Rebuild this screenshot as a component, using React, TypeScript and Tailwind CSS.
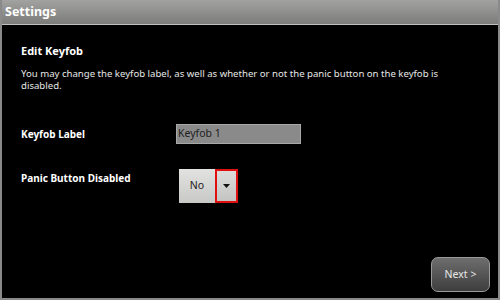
import React from "react";

export default function App() {
  const font = { fontFamily: '"Noto Sans", "Open Sans", sans-serif' };
  return (
    <div
      className="w-[500px] h-[300px] bg-black flex flex-col border-l-[2px] border-r-[2px] border-b-[2px] border-[#8a8a8a] overflow-hidden"
      style={font}
    >
      <div className="h-[25px] shrink-0 bg-gradient-to-b from-[#a2a2a0] to-[#7c7c7a] border-b border-[#c0c0c0] flex items-center pl-[3px]">
        <span className="text-white font-bold text-[12.5px] leading-none">Settings</span>
      </div>
      <div className="flex-1 flex flex-col pl-[19px] pr-[10px] relative">
        <div className="mt-[19px] text-white font-bold text-[11px] leading-[14px]">Edit Keyfob</div>
        <div className="mt-[10px] text-[#e6e6e6] text-[9.6px] leading-[12px] w-[440px]">
          You may change the keyfob label, as well as whether or not the panic button on the keyfob is disabled.
        </div>
        <div className="mt-[32px] flex items-center">
          <div className="w-[155px] text-white font-bold text-[10px]">Keyfob Label</div>
          <div className="w-[125px] h-[20px] bg-[#8a8a8a] border border-[#a8a8a8] flex items-center pl-[1px] text-[#202020] text-[10.5px]">
            Keyfob 1
          </div>
        </div>
        <div className="mt-[25px] flex items-start">
          <div className="w-[158px] text-white font-bold text-[10px] mt-[2px]">Panic Button Disabled</div>
          <div className="flex h-[34px]">
            <div className="w-[36px] bg-gradient-to-b from-[#e2e2e0] to-[#c8c8c6] flex items-center justify-center text-[#222] text-[10.5px]">
              No
            </div>
            <div className="w-[23px] bg-gradient-to-b from-[#dcdcda] to-[#c4c4c2] border-[2px] border-[#e01010] flex items-center justify-center">
              <svg width="7" height="4" viewBox="0 0 7 4"><path d="M0 0h7L3.5 4z" fill="#111" /></svg>
            </div>
          </div>
        </div>
        <div className="absolute right-[8px] bottom-[6px] w-[59px] h-[35px] rounded-[7px] border border-[#9a9a9a] bg-gradient-to-b from-[#6e6e6e] to-[#3e3e3e] flex items-center justify-center text-[#e8e8e8] text-[10.5px]">
          Next &gt;
        </div>
      </div>
    </div>
  );
}
